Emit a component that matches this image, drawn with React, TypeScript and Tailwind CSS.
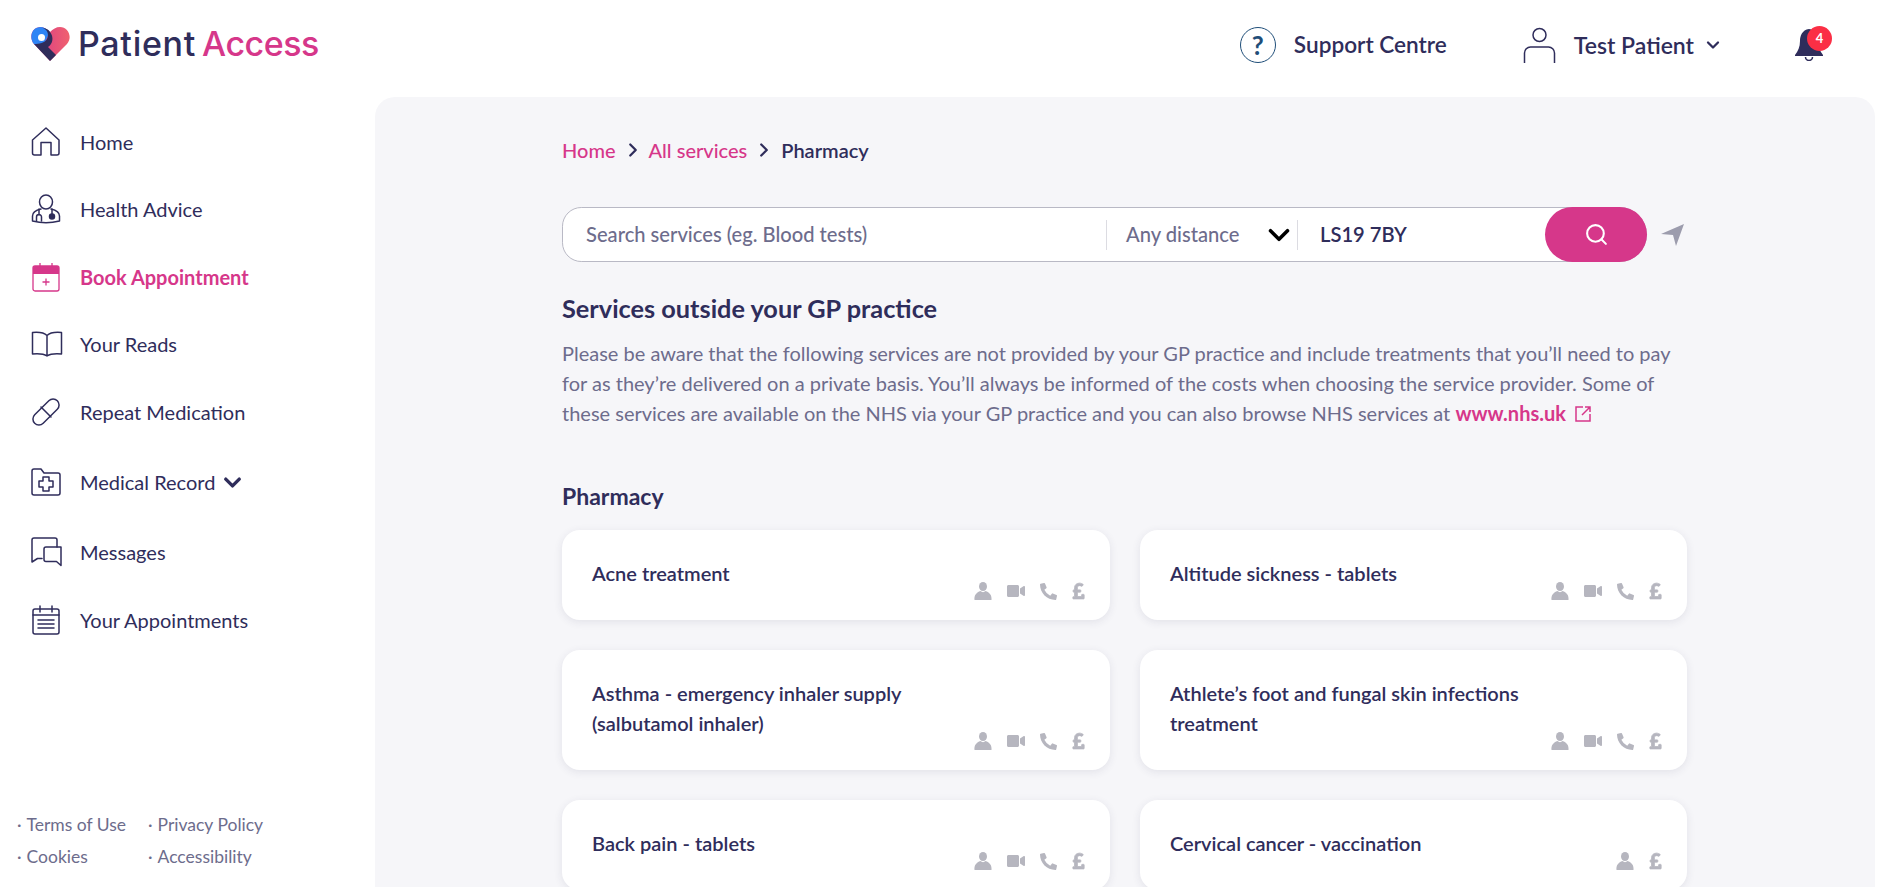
import React from 'react'
import { FaPhoneAlt, FaPoundSign, FaVideo } from 'react-icons/fa'
import { ChevronDown, ChevronRight, Search } from 'lucide-react'

const stroke = { fill: 'none', stroke: 'currentColor', strokeWidth: 1.5, strokeLinecap: 'round', strokeLinejoin: 'round' } as const

const Logo = () => (
  <svg width="39" height="34" viewBox="0 0 39 34">
    <defs>
      <linearGradient id="heart" x1="0" x2="1" y1="0" y2="0">
        <stop offset="0" stopColor="#d6378a" />
        <stop offset="1" stopColor="#f0616f" />
      </linearGradient>
    </defs>
    <path d="M19 34 L3 17 C-2 11 0 1 9 0 C13 0 16 2 19 5 C22 2 25 0 29 0 C37 0 42 10 36 17 Z" fill="url(#heart)" />
    <path d="M3 17 C-2 11 0 1 9 0 C13 0 16 2 19 5 L12 19 Z" fill="#2f84f5" />
    <path d="M3 17 L19 34 L25 28 L17 20 C22 17 23 10 19 5 C17 2 14 1 12 1 C17 3 18 8 16 12 C14 16 8 17 3 17 Z" fill="#2f2d5b" />
    <circle cx="10.5" cy="10.5" r="3.5" fill="#fff" />
  </svg>
)

const HomeIcon = () => (
  <svg width="30" height="30" viewBox="0 0 30 30" {...stroke}>
    <path d="M1.5 13 L15 1 L28 13 V26 a2 2 0 0 1 -2 2 H20 V15.5 H10 V28 H3.5 a2 2 0 0 1 -2 -2 Z" />
  </svg>
)

const DoctorIcon = () => (
  <svg width="30" height="30" viewBox="0 0 30 30" {...stroke}>
    <ellipse cx="15" cy="8" rx="6.5" ry="7" />
    <path d="M1.5 27 v-5 c0-4 4-6 8.5-7 M20 15 c4.500 1 8.500 3 8.500 7 v5 c-8 2-19 2-27 0" />
    <path d="M8 15 v6 M5.500 27 v-4 a2.500 2.500 0 0 1 5 0 v4 M21 15 v6" />
    <circle cx="21" cy="22.500" r="2.500" fill="currentColor" />
  </svg>
)

const BookAppointmentIcon = () => (
  <svg width="30" height="30" viewBox="0 0 30 30" fill="none">
    <path d="M2 12 V6 a2 2 0 0 1 2-2 H26 a2 2 0 0 1 2 2 V12 Z" fill="#d6378a" />
    <rect x="2" y="4" width="26" height="25" rx="2" stroke="#d6378a" strokeWidth="1.300" />
    <path d="M9 1 V6 M21 1 V6" stroke="#d6378a" strokeWidth="1.300" />
    <path d="M15 16.500 V23.500 M11.500 20 H18.500" stroke="#d6378a" strokeWidth="1.300" />
  </svg>
)

const BookIcon = () => (
  <svg width="32" height="26" viewBox="0 0 32 26" {...stroke}>
    <path d="M16 4.500 C13 1.500 7 1 1.500 1.500 V23 C7 22.500 13 23 16 25 C19 23 25 22.500 30.500 23 V1.500 C25 1 19 1.500 16 4.500 Z M16 4.500 V25" />
  </svg>
)

const PillIcon = () => (
  <svg width="30" height="30" viewBox="0 0 30 30" {...stroke}>
    <rect x="-1" y="9" width="32" height="12" rx="6" transform="rotate(-45 15 15)" />
    <path d="M10 10 L20 20" />
  </svg>
)

const FolderIcon = () => (
  <svg width="30" height="28" viewBox="0 0 30 28" {...stroke}>
    <path d="M1 3 a2 2 0 0 1 2-2 H10 L13 5 H27 a2 2 0 0 1 2 2 V25 a2 2 0 0 1 -2 2 H3 a2 2 0 0 1 -2-2 Z" />
    <path d="M12 9 H18 V13 H22 V19 H18 V23 H12 V19 H8 V13 H12 Z" />
  </svg>
)

const MessagesIcon = () => (
  <svg width="31" height="30" viewBox="0 0 31 30" {...stroke}>
    <path d="M26 10 V3 a2 2 0 0 0 -2 -2 H3 a2 2 0 0 0 -2 2 V25 L6.500 21.500 H11" />
    <path d="M13 12 a2 2 0 0 1 2-2 H30 V28.500 L25.500 24.500 H15 a2 2 0 0 1 -2-2 Z" />
  </svg>
)

const AppointmentsIcon = () => (
  <svg width="30" height="30" viewBox="0 0 30 30" {...stroke}>
    <rect x="2" y="4" width="26" height="25" rx="2" />
    <path d="M2 10 H28 M9 1 V7 M21 1 V7 M7 15 H23 M7 19 H23 M7 23 H23" />
  </svg>
)

const PersonIcon = ({ className }: { className?: string }) => (
  <svg viewBox="0 0 18 18" className={className} fill="currentColor">
    <ellipse cx="9" cy="4.500" rx="4" ry="4.500" />
    <path d="M0.500 18 C0 13 2.500 10.500 6.500 9 C8 10.500 10 10.500 11.500 9 C15.500 10.500 18 13 17.500 18 Z" />
  </svg>
)

type NavItem = { label: string; icon: React.ReactNode; h: string; active?: boolean; caret?: boolean }

const navItems: NavItem[] = [
  { label: 'Home', icon: <HomeIcon />, h: 'h-[67px]' },
  { label: 'Health Advice', icon: <DoctorIcon />, h: 'h-[68px]' },
  { label: 'Book Appointment', icon: <BookAppointmentIcon />, h: 'h-[67px]', active: true },
  { label: 'Your Reads', icon: <BookIcon />, h: 'h-[67px]' },
  { label: 'Repeat Medication', icon: <PillIcon />, h: 'h-[70px]' },
  { label: 'Medical Record', icon: <FolderIcon />, h: 'h-[70px]', caret: true },
  { label: 'Messages', icon: <MessagesIcon />, h: 'h-[69px]' },
  { label: 'Your Appointments', icon: <AppointmentsIcon />, h: 'h-[67px]' },
]

const services = [
  { title: ['Acne treatment'], full: true, h: 'h-[90px]' },
  { title: ['Altitude sickness - tablets'], full: true, h: 'h-[90px]' },
  { title: ['Asthma - emergency inhaler supply', '(salbutamol inhaler)'], full: true, h: 'h-[120px]' },
  { title: ['Athlete’s foot and fungal skin infections', 'treatment'], full: true, h: 'h-[120px]' },
  { title: ['Back pain - tablets'], full: true, h: 'h-[90px]' },
  { title: ['Cervical cancer - vaccination'], full: false, h: 'h-[90px]' },
]

const ServiceCard = ({ title, full, h }: { title: string[]; full: boolean; h: string }) => (
  <div className={`${h} bg-white rounded-[18px] shadow-[0_2px_8px_rgba(47,45,91,0.1)] pl-[30px] pr-[24px] pb-[20px] flex justify-between items-end`}>
    <div className="self-start pt-[28px] text-[20px] leading-[30px] font-semibold text-[#2f2d5b]">
      {title.map((line) => (
        <div key={line}>{line}</div>
      ))}
    </div>
    <div className="flex items-center gap-[15px] text-[#b6b6bf]">
      <PersonIcon className="w-[18px] h-[18px]" />
      {full && <FaVideo className="w-[18px] h-[18px]" />}
      {full && <FaPhoneAlt className="w-[17px] h-[17px]" />}
      <FaPoundSign className="w-[15px] h-[18px] -ml-[1px]" stroke="currentColor" strokeWidth={24} />
    </div>
  </div>
)

export default function App() {
  return (
    <div className="h-screen overflow-hidden bg-white text-[#2f2d5b] font-['Lato',sans-serif]">
      <header className="h-[97px] flex items-center justify-between pl-[31px] pr-[70px]">
        <div className="flex items-center gap-[8px] -mt-[9px]">
          <Logo />
          <div className="font-['Inter',sans-serif] text-[34px] font-medium leading-none">
            <span className="tracking-[0.7px]">Patient</span> <span className="text-[#d6378a] -ml-[3px] tracking-[-0.5px]">Access</span>
          </div>
        </div>
        <div className="flex items-center pb-[7px]">
          <div className="flex items-center gap-[18px] mr-[76px]">
            <div className="w-[36px] h-[36px] rounded-full border-[1.5px] border-[#1f4e79] flex items-center justify-center text-[26px] font-bold text-[#1f4e79]">?</div>
            <span className="text-[22.6px] font-semibold">Support Centre</span>
          </div>
          <div className="flex items-center mr-[72px]">
            <svg width="33" height="36" viewBox="0 0 33 36" className="mr-[18px]" {...stroke}>
              <circle cx="16.500" cy="8" r="6.500" />
              <path d="M1.500 36 V26 a6 6 0 0 1 6-6 H25.500 a6 6 0 0 1 6 6 V36" />
            </svg>
            <span className="text-[23px] font-semibold">Test Patient</span>
            <ChevronDown className="w-[20px] h-[20px] ml-[9px]" strokeWidth={2.750} />
          </div>
          <div className="relative w-[27px] h-[32px]">
            <svg width="28" height="32" viewBox="0 0 28 32" fill="#2f2d5b">
              <path d="M14 0 C7 1 5 7 5 12 C5 18 3 22 0 26 V27 H28 V26 C25 22 23 18 23 12 C23 7 21 1 14 0 Z" />
              <path d="M10.500 28 a3.500 3.500 0 0 0 7 0" fill="none" stroke="#2f2d5b" strokeWidth="1.500" />
            </svg>
            <span className="absolute -top-[3px] left-[12px] w-[25px] h-[25px] rounded-full bg-[#fb2f45] text-white text-[13px] font-bold flex items-center justify-center">4</span>
          </div>
        </div>
      </header>

      <div className="flex h-[790px]">
        <aside className="w-[375px] flex flex-col justify-between pb-[19px]">
          <nav className="pt-[11px] pl-[31px]">
            {navItems.map((item) => (
              <div key={item.label} className={`${item.h} flex items-center ${item.active ? 'text-[#d6378a] font-bold' : ''}`}>
                <div className="w-[49px] flex items-center">{item.icon}</div>
                <span className="text-[20px]">{item.label}</span>
                {item.caret && <ChevronDown className="w-[27px] h-[27px] ml-[4px]" strokeWidth={3} />}
              </div>
            ))}
          </nav>
          <div className="grid grid-cols-[131px_1fr] gap-y-[10px] pl-[17px] text-[17.5px] leading-[22px] text-[#6d6c8c]">
            {['Terms of Use', 'Privacy Policy', 'Cookies', 'Accessibility'].map((link) => (
              <div key={link} className="whitespace-nowrap">
                <span className="mr-[5px]">·</span>
                {link}
              </div>
            ))}
          </div>
        </aside>

        <main className="w-[1500px] bg-[#f6f6f9] rounded-t-[20px]">
          <div className="w-[1126px] mx-auto pt-[38px]">
            <div className="flex items-center h-[30px] text-[20px] font-medium">
              <span className="text-[#d6378a]">Home</span>
              <ChevronRight className="w-[22px] h-[22px] ml-[6px] mr-[5px]" strokeWidth={2.500} />
              <span className="text-[#d6378a]">All services</span>
              <ChevronRight className="w-[22px] h-[22px] mx-[6px]" strokeWidth={2.500} />
              <span className="font-semibold">Pharmacy</span>
            </div>

            <div className="flex items-center mt-[42px] h-[55px]">
              <div className="w-[1085px] h-[55px] bg-white rounded-l-[28px] rounded-r-[40px] border border-[#b9b9c5] flex items-center text-[20.15px] relative">
                <div className="w-[543px] pl-[23px] font-medium text-[#6d6c8c]">Search services (eg. Blood tests)</div>
                <div className="w-[192px] h-[30px] border-l border-r border-[#dcdce2] flex items-center justify-between pl-[19px] pr-[1px] font-medium text-[#6d6c8c]">
                  <span>Any distance</span>
                  <ChevronDown className="w-[34px] h-[34px] text-black" strokeWidth={2.500} />
                </div>
                <div className="pl-[22px] font-semibold">LS19 7BY</div>
                <div className="absolute -right-px -top-px w-[102px] h-[55px] rounded-[28px] bg-[#d6378a] flex items-center justify-center">
                  <Search className="w-[25px] h-[25px] text-white" strokeWidth={2} />
                </div>
              </div>
              <svg width="24" height="22" viewBox="0 0 24 22" className="ml-[14px]" fill="#9c9cad">
                <path d="M23 0 L0 10 L12 11 L15 22 Z" />
              </svg>
            </div>

            <h1 className="mt-[29px] text-[25.3px] leading-[34px] font-bold">Services outside your GP practice</h1>
            <p className="mt-[13px] text-[20px] leading-[30px] text-[#6d6c8c]">
              Please be aware that the following services are not provided by your GP practice and include treatments that you’ll need to pay for as they’re delivered on a private basis. You’ll always be informed of the costs when choosing the service provider. Some of these services are available on the NHS via your GP practice and you can also browse NHS services at{' '}
              <span className="font-bold text-[#d6378a]">www.nhs.uk</span>
              <svg width="16" height="16" viewBox="0 0 16 16" fill="none" stroke="#d6378a" strokeWidth="1.500" className="inline ml-[9px] -mt-[3px]">
                <path d="M8 1 H1 V15 H15 V8 M10 1 H15 V6 M15 1 L7 9" />
              </svg>
            </p>

            <h2 className="mt-[53px] text-[23px] leading-[30px] font-bold">Pharmacy</h2>
            <div className="grid grid-cols-[548px_547px] gap-[30px] mt-[19px]">
              {services.map((s) => (
                <ServiceCard key={s.title[0]} title={s.title} full={s.full} h={s.h} />
              ))}
            </div>
          </div>
        </main>
      </div>
    </div>
  )
}
